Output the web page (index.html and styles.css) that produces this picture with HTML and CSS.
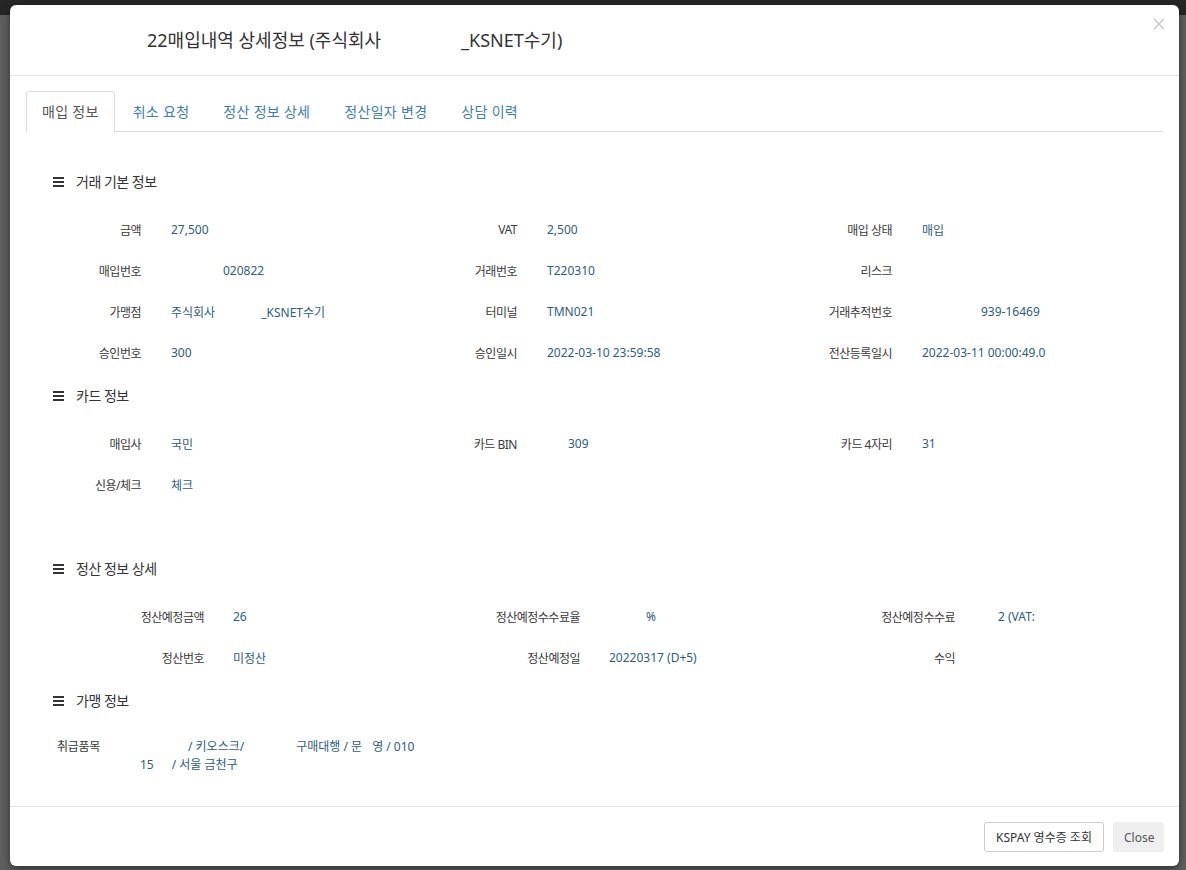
FILE: index.html
```html
<!DOCTYPE html>
<html lang="ko">
<head>
<meta charset="utf-8">
<title>매입내역 상세정보</title>
<link rel="stylesheet" href="styles.css">
</head>
<body>
<div class="backdrop-top"></div>
<div class="modal">
  <div class="modal-header">
    <h4 class="modal-title">22매입내역 상세정보 (주식회사<span class="redact w80"></span>_KSNET수기)</h4>
    <button class="close" aria-label="Close">
      <svg width="12" height="12" viewBox="0 0 12 12"><path d="M1 1L11 11M11 1L1 11" stroke="#c4c4c4" stroke-width="1.4" fill="none"/></svg>
    </button>
  </div>
  <div class="modal-body">
    <ul class="nav-tabs">
      <li class="active"><a>매입 정보</a></li>
      <li><a>취소 요청</a></li>
      <li><a>정산 정보 상세</a></li>
      <li><a>정산일자 변경</a></li>
      <li><a>상담 이력</a></li>
    </ul>
    <div class="tab-content">
      <section class="sec">
        <h5 class="sec-title"><span class="bars"><i></i><i></i><i></i></span>거래 기본 정보</h5>
        <div class="grid">
          <div class="field"><span class="lbl">금액</span><span class="val">27,500</span></div>
          <div class="field"><span class="lbl">VAT</span><span class="val">2,500</span></div>
          <div class="field"><span class="lbl">매입 상태</span><span class="val">매입</span></div>
          <div class="field"><span class="lbl">매입번호</span><span class="val"><span class="redact w52"></span>020822</span></div>
          <div class="field"><span class="lbl">거래번호</span><span class="val">T220310</span></div>
          <div class="field"><span class="lbl">리스크</span><span class="val"></span></div>
          <div class="field"><span class="lbl">가맹점</span><span class="val">주식회사<span class="redact w46"></span>_KSNET수기</span></div>
          <div class="field"><span class="lbl">터미널</span><span class="val">TMN021</span></div>
          <div class="field"><span class="lbl">거래추적번호</span><span class="val"><span class="redact w59"></span>939-16469</span></div>
          <div class="field"><span class="lbl">승인번호</span><span class="val">300</span></div>
          <div class="field"><span class="lbl">승인일시</span><span class="val">2022-03-10 23:59:58</span></div>
          <div class="field"><span class="lbl">전산등록일시</span><span class="val">2022-03-11 00:00:49.0</span></div>
        </div>
      </section>
      <section class="sec">
        <h5 class="sec-title"><span class="bars"><i></i><i></i><i></i></span>카드 정보</h5>
        <div class="grid">
          <div class="field"><span class="lbl">매입사</span><span class="val">국민</span></div>
          <div class="field"><span class="lbl">카드 BIN</span><span class="val"><span class="redact w21"></span>309</span></div>
          <div class="field"><span class="lbl">카드 4자리</span><span class="val">31</span></div>
          <div class="field"><span class="lbl">신용/체크</span><span class="val">체크</span></div>
          <div class="field"></div>
          <div class="field"></div>
          <div class="field"></div>
        </div>
      </section>
      <section class="sec">
        <h5 class="sec-title"><span class="bars"><i></i><i></i><i></i></span>정산 정보 상세</h5>
        <div class="grid wide">
          <div class="field"><span class="lbl">정산예정금액</span><span class="val">26</span></div>
          <div class="field"><span class="lbl">정산예정수수료율</span><span class="val"><span class="redact w37"></span>%</span></div>
          <div class="field"><span class="lbl">정산예정수수료</span><span class="val"><span class="redact w14"></span>2 (VAT:</span></div>
          <div class="field"><span class="lbl">정산번호</span><span class="val">미정산</span></div>
          <div class="field"><span class="lbl">정산예정일</span><span class="val">20220317 (D+5)</span></div>
          <div class="field"><span class="lbl">수익</span><span class="val"></span></div>
        </div>
      </section>
      <section class="sec">
        <h5 class="sec-title"><span class="bars"><i></i><i></i><i></i></span>가맹 정보</h5>
        <div class="merchant">
          <span class="m-lbl">취급품목</span>
          <span class="m-val"><span class="redact w48"></span>/ 키오스크/<span class="redact w52"></span>구매대행 / 문<span class="redact w10"></span>영 / 010<br>15<span class="redact w18"></span>/ 서울 금천구</span>
        </div>
      </section>
    </div>
  </div>
  <div class="modal-footer">
    <button class="btn btn-default">KSPAY 영수증 조회</button>
    <button class="btn btn-close">Close</button>
  </div>
</div>
</body>
</html>
```

FILE: styles.css
```css
html, body {
  margin: 0;
  padding: 0;
}
body {
  width: 1186px;
  height: 870px;
  overflow: hidden;
  background: #5f5f5f;
  font-family: "Noto Sans", "Noto Sans CJK KR", sans-serif;
  color: #333;
  position: relative;
}
.backdrop-top {
  height: 15px;
  background: #262626;
}
.modal {
  position: absolute;
  left: 10px;
  top: 5px;
  width: 1169px;
  height: 861px;
  background: #fff;
  border-radius: 6px;
  box-shadow: 0 3px 9px rgba(0, 0, 0, 0.5);
  display: flex;
  flex-direction: column;
}
.modal-header {
  height: 71px;
  box-sizing: border-box;
  padding: 15px 15px 15px 137px;
  border-bottom: 1px solid #e5e5e5;
  display: flex;
  justify-content: space-between;
  align-items: flex-start;
}
.modal-title {
  margin: 0;
  font-size: 18px;
  line-height: 40px;
  font-weight: 400;
  color: #333;
}
.close {
  border: 0;
  background: none;
  padding: 0;
  margin: -3px -2px 0 0;
  width: 14px;
  height: 14px;
  display: flex;
  align-items: center;
  justify-content: center;
}
.modal-body {
  flex: 1;
  padding: 15px 16px 0 16px;
}
.nav-tabs {
  list-style: none;
  margin: 0;
  padding: 0;
  display: flex;
  border-bottom: 1px solid #ddd;
  height: 41px;
  box-sizing: border-box;
}
.nav-tabs li {
  margin-right: 2px;
  margin-bottom: -1px;
}
.nav-tabs a {
  display: block;
  padding: 10px 15px;
  line-height: 20px;
  font-size: 14px;
  letter-spacing: 0.3px;
  color: #3a7fb5;
  border: 1px solid transparent;
  border-radius: 4px 4px 0 0;
}
.nav-tabs li.active a {
  color: #555;
  background: #fff;
  border-color: #ddd #ddd transparent #ddd;
}
.tab-content {
  padding: 40px 0 0 15px;
}
.sec {
  margin-bottom: 13px;
}
.sec-title {
  margin: 0 0 17px 12px;
  height: 20px;
  line-height: 20px;
  font-size: 14px;
  font-weight: 400;
  color: #333;
  display: flex;
  align-items: center;
  letter-spacing: -0.5px;
}
.bars {
  display: flex;
  flex-direction: column;
  justify-content: space-between;
  width: 11px;
  height: 10px;
  margin-right: 12px;
}
.bars i {
  display: block;
  height: 2px;
  background: #333;
}
.grid {
  display: grid;
  grid-template-columns: 376px 375px 375px;
  grid-auto-rows: 41px;
}
.field {
  display: flex;
  align-items: center;
  font-size: 12px;
}
.lbl {
  width: 100px;
  text-align: right;
  color: #3a3a3a;
  letter-spacing: -0.5px;
  white-space: nowrap;
}
.grid.wide .lbl {
  width: 163px;
}
.val {
  margin-left: 30px;
  color: #2d5c84;
  white-space: nowrap;
  display: flex;
  align-items: center;
}
.grid.wide .val {
  margin-left: 29px;
}
.redact {
  display: inline-block;
  height: 1px;
}
.w10 { width: 10px; }
.w14 { width: 14px; }
.w18 { width: 18px; }
.w21 { width: 21px; }
.w37 { width: 37px; }
.w46 { width: 46px; }
.w48 { width: 48px; }
.w52 { width: 52px; }
.w59 { width: 59px; }
.w80 { width: 80px; }
.merchant {
  display: flex;
  align-items: flex-start;
  margin: 27px 0 0 16px;
  font-size: 12px;
  line-height: 18px;
}
.m-lbl {
  width: 83px;
  color: #3a3a3a;
  letter-spacing: -0.3px;
}
.m-val {
  color: #2d5c84;
}
.modal-footer {
  height: 60px;
  box-sizing: border-box;
  border-top: 1px solid #e5e5e5;
  padding: 15px 15px 0 15px;
  display: flex;
  justify-content: flex-end;
  align-items: flex-start;
  gap: 9px;
}
.btn {
  height: 30px;
  font-family: "Noto Sans", "Noto Sans CJK KR", sans-serif;
  font-size: 12px;
  border-radius: 3px;
  padding: 0 10px;
  cursor: pointer;
}
.btn-default {
  width: 120px;
  background: #fff;
  border: 1px solid #ccc;
  color: #333;
}
.btn-close {
  width: 51px;
  background: #efefef;
  border: 1px solid #efefef;
  color: #555;
}
```
